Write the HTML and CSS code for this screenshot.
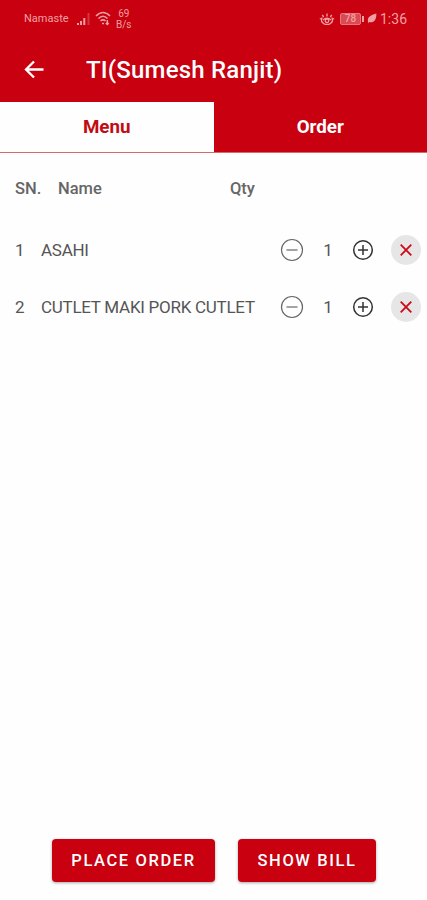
FILE: index.html
```html
<!DOCTYPE html>
<html lang="en">

<head>
    <meta charset="UTF-8">
    <meta name="viewport" content="width=device-width, initial-scale=1.0">
    <title>TI(Sumesh Ranjit)</title>
    <link rel="stylesheet" href="styles.css">
</head>

<body>
    <header>
        <div class="status-bar">
            <span class="carrier">Namaste</span>
            <svg class="signal" width="15" height="13" viewBox="0 0 15 13">
                <path d="M1 11v2M4 9v4M7.3 6v7" />
                <path class="dim" d="M11.5 1v12" />
            </svg>
            <svg class="wifi" width="17" height="15" viewBox="0 0 17 15">
                <path d="M1 5Q8 -2 15 5M3.5 7.5Q8 3 12.5 7.5M5.5 10Q8 7.7 10.5 10" />
                <path d="M7 12.4h2M12.3 9v4.5M10.8 12l1.5 1.5 1.5-1.5" />
            </svg>
            <span class="speed">69<br>B/s</span>
            <div class="status-right">
                <svg class="eye" width="16" height="14" viewBox="0 0 16 14">
                    <path d="M3.2 5.5Q1 9.5 5 11.8Q8 13 11 11.8Q15 9.5 12.8 5.5M4 8Q8 4.2 12 8M8 4.5V1.5M4.8 5L3.2 3M11.2 5l1.6-2M3 7.5L.8 6.5M13 7.5l2.2-1" />
                    <circle cx="8" cy="8.8" r="1.8" />
                </svg>
                <div class="battery"><span>78</span></div>
                <svg class="leaf" width="10" height="11" viewBox="0 0 10 11">
                    <path d="M1.2 9.5C-.5 4 4 2 9.3 .5C9.8 6.5 6.5 10.5 2.2 9L.8 10.8z" />
                </svg>
                <span class="clock">1:36</span>
            </div>
        </div>
        <div class="toolbar">
            <svg class="back" width="20" height="20" viewBox="0 0 20 20">
                <path d="M19.5 9.5H2M10 1.5l-8 8 8 8" />
            </svg>
            <h1>TI(Sumesh Ranjit)</h1>
        </div>
    </header>

    <nav class="tabs">
        <div class="tab active">Menu</div>
        <div class="tab">Order</div>
    </nav>

    <main>
        <div class="list-head">
            <span class="head-sn">SN.</span>
            <span class="head-name">Name</span>
            <span>Qty</span>
        </div>
        <div class="item">
            <span class="sn">1</span>
            <span class="name">ASAHI</span>
            <svg class="minus" width="24" height="24" viewBox="0 0 24 24">
                <circle cx="12" cy="12" r="10.5" />
                <path d="M6.5 12h11" />
            </svg>
            <span class="qty">1</span>
            <svg class="plus" width="22" height="22" viewBox="0 0 22 22">
                <circle cx="11" cy="11" r="9.3" />
                <path d="M6 11h10M11 6v10" />
            </svg>
            <div class="remove">
                <svg width="12" height="12" viewBox="0 0 12 12">
                    <path d="M.7 .7l10.6 10.6M11.3 .7L.7 11.3" />
                </svg>
            </div>
        </div>
        <div class="item">
            <span class="sn">2</span>
            <span class="name">CUTLET MAKI PORK CUTLET</span>
            <svg class="minus" width="24" height="24" viewBox="0 0 24 24">
                <circle cx="12" cy="12" r="10.5" />
                <path d="M6.5 12h11" />
            </svg>
            <span class="qty">1</span>
            <svg class="plus" width="22" height="22" viewBox="0 0 22 22">
                <circle cx="11" cy="11" r="9.3" />
                <path d="M6 11h10M11 6v10" />
            </svg>
            <div class="remove">
                <svg width="12" height="12" viewBox="0 0 12 12">
                    <path d="M.7 .7l10.6 10.6M11.3 .7L.7 11.3" />
                </svg>
            </div>
        </div>
    </main>

    <footer>
        <button class="place">PLACE ORDER</button>
        <button class="bill">SHOW BILL</button>
    </footer>
</body>

</html>
```
FILE: styles.css
```css
* {
    box-sizing: border-box;
}

body {
    margin: 0;
    height: 900px;
    display: flex;
    flex-direction: column;
    font-family: Roboto, "Liberation Sans", sans-serif;
    background-color: #fefefe;
    overflow: hidden;
}

svg {
    display: block;
    flex-shrink: 0;
    fill: none;
}

header {
    height: 102px;
    background-color: #c8000f;
    color: #fff;
}

.status-bar {
    display: flex;
    align-items: center;
    height: 37px;
    padding: 0 20px 0 24px;
    color: #f0a0a4;
    stroke: #f0a0a4;
}

.status-bar span {
    stroke: none;
}

.carrier {
    width: 53px;
    font-size: 11px;
}

.signal {
    stroke-width: 2;
}

.signal .dim {
    stroke: #d8343f;
}

.wifi {
    margin-left: 3px;
    stroke-width: 1.5;
}

.speed {
    margin-left: 4px;
    font-size: 10px;
    line-height: 11px;
    text-align: center;
}

.status-right {
    display: flex;
    align-items: center;
    margin-left: auto;
}

.eye {
    stroke-width: 1.3;
}

.battery {
    position: relative;
    width: 21px;
    height: 12px;
    margin: 0 6px 0 5px;
    border: 1px solid #e8777d;
    border-radius: 2px;
    background-color: #d94a53;
    font-size: 10px;
    font-weight: 500;
    line-height: 10px;
    text-align: center;
}

.battery::after {
    content: "";
    position: absolute;
    top: 2px;
    right: -4px;
    width: 2px;
    height: 6px;
    background-color: #f0a0a4;
}

.leaf {
    fill: #f0a0a4;
    stroke: none;
}

.clock {
    margin-left: 3px;
    font-size: 14px;
}

.toolbar {
    display: flex;
    align-items: center;
    height: 65px;
    padding-left: 24px;
}

.back {
    stroke: #fff;
    stroke-width: 2.3;
}

h1 {
    margin: 0 0 0 42px;
    font-size: 24px;
    font-weight: 500;
    letter-spacing: 0.2px;
    white-space: nowrap;
}

.tabs {
    display: flex;
    height: 51px;
    background-color: #c8000f;
    border-bottom: 1px solid #d06a6c;
}

.tab {
    flex: 1;
    display: flex;
    align-items: center;
    justify-content: center;
    font-size: 18.8px;
    font-weight: 700;
    color: #fff;
}

.tab.active {
    background-color: #fefefe;
    color: #c20c14;
}

main {
    flex: 1;
}

.list-head {
    display: flex;
    align-items: center;
    height: 68px;
    padding: 2px 0 0 15px;
    font-size: 16.5px;
    font-weight: 500;
    color: #666;
}

.head-sn {
    width: 43px;
}

.head-name {
    width: 172px;
}

.item {
    display: flex;
    align-items: center;
    height: 57px;
    padding-left: 15px;
    font-size: 17px;
    letter-spacing: -0.27px;
    color: #555;
}

.sn {
    width: 26px;
}

.name {
    width: 239px;
    white-space: nowrap;
}

.minus {
    stroke: #666;
    stroke-width: 1.2;
}

.qty {
    width: 48px;
    text-align: center;
}

.plus {
    stroke: #333;
    stroke-width: 1.5;
}

.remove {
    display: flex;
    align-items: center;
    justify-content: center;
    width: 30px;
    height: 30px;
    margin-left: 17px;
    border-radius: 50%;
    background-color: #e6e6e6;
}

.remove svg {
    stroke: #cc0a18;
    stroke-width: 1.8;
}

footer {
    display: flex;
    gap: 23px;
    padding: 0 51px 18px 52px;
}

button {
    height: 43px;
    padding: 0;
    border: none;
    border-radius: 4px;
    background-color: #c8000f;
    box-shadow: 0 1px 3px rgba(0, 0, 0, 0.35);
    font-family: inherit;
    font-size: 16.5px;
    font-weight: 500;
    letter-spacing: 1.6px;
    color: #fff;
}

.place {
    width: 163px;
}

.bill {
    width: 138px;
}
```
